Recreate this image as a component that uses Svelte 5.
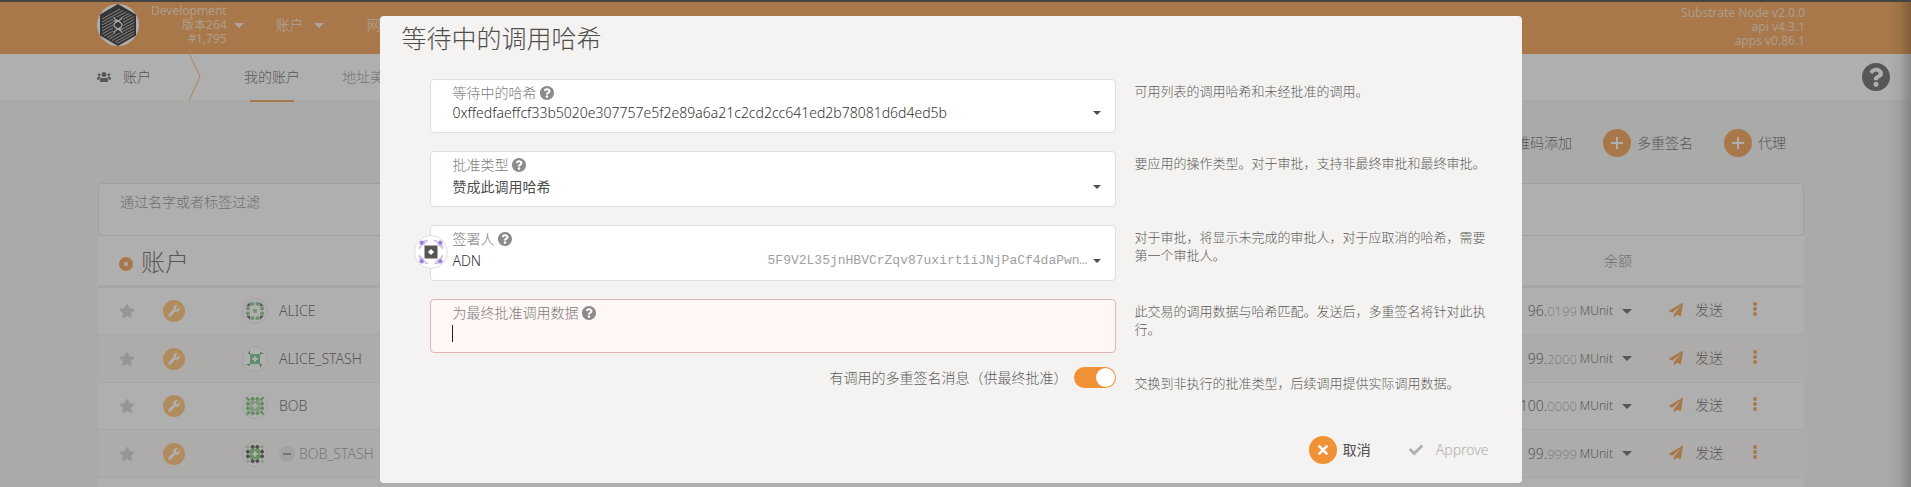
<script>
  const accounts = [
    { name: 'ALICE', kind: 'alice', whole: '96', decimals: '0199' },
    { name: 'ALICE_STASH', kind: 'aliceStash', whole: '99', decimals: '2000' },
    { name: 'BOB', kind: 'bob', whole: '100', decimals: '0000' },
    { name: 'BOB_STASH', kind: 'bobStash', whole: '99', decimals: '9999', muted: true }
  ];
  const sides = [[1, 0], [2, 0], [3, 1], [3, 2], [2, 3], [1, 3], [0, 2], [0, 1]];
  const corners = [[0, 0, 0], [3, 0, 90], [3, 3, 180], [0, 3, 270]];
  const looks = {
    alice: { side: 'square', sideColor: '#6fc46f', corner: 'wedge', cornerColor: '#4b4b4b', core: '#8ccb8c', coreShape: 'small' },
    aliceStash: { side: 'none', sideColor: '#fff', corner: 'spike', cornerColor: '#2f8a4a', core: '#5bbd7c', coreShape: 'star' },
    bob: { side: 'diamond', sideColor: '#66b85c', corner: 'blade', cornerColor: '#66b85c', core: '#a3d39b', coreShape: 'star' },
    bobStash: { side: 'diamond', sideColor: '#3f3f3f', corner: 'dot', cornerColor: '#a8dca0', core: '#6cc35c', coreShape: 'star' },
    adn: { side: 'shard', sideColor: '#cfc2ec', corner: 'dot', cornerColor: '#9b82d8', core: '#555555', coreShape: 'diamond' }
  };
  let hash = $state('0xffedfaeffcf33b5020e307757e5f2e89a6a21c2cd2cc641ed2b78081d6d4ed5b');
  let callData = $state('');
  let withCall = $state(true);
</script>

{#snippet helpIcon()}
  <svg class="help-icon" viewBox="8 8 496 496" aria-hidden="true"><path d="M504 256c0 136.997-111.043 248-248 248S8 392.997 8 256C8 119.083 119.043 8 256 8s248 111.083 248 248zM262.655 90c-54.497 0-89.255 22.957-116.549 63.758-3.536 5.286-2.353 12.415 2.715 16.258l34.699 26.31c5.205 3.947 12.621 3.008 16.665-2.122 17.864-22.658 30.113-35.797 57.303-35.797 20.429 0 45.698 13.148 45.698 32.958 0 14.976-12.363 22.667-32.534 33.976C247.128 238.528 216 254.941 216 296v4c0 6.627 5.373 12 12 12h56c6.627 0 12-5.373 12-12v-1.333c0-28.462 83.186-29.647 83.186-106.667 0-58.002-60.165-102-116.531-102zM256 338c-25.365 0-46 20.635-46 46 0 25.364 20.635 46 46 46s46-20.636 46-46c0-25.365-20.635-46-46-46z" /></svg>
{/snippet}

{#snippet plusIcon()}
  <span class="round"><svg viewBox="0 0 14 14" width="14" height="14" aria-hidden="true"><path d="M7 1.8v10.4M1.8 7h10.4" stroke="#fff" stroke-width="2" stroke-linecap="round" /></svg></span>
{/snippet}

{#snippet identicon(kind)}
  {@const look = looks[kind]}
  <svg class="identicon" viewBox="-0.75 -0.75 5.5 5.5" aria-hidden="true">
    <circle cx="2" cy="2" r="2.65" fill="#fff" stroke="#ddd" stroke-width=".16" />
    {#each sides as [x, y]}
      {#if look.side === 'square'}
        <rect x={x + 0.14} y={y + 0.14} width=".72" height=".72" rx=".12" fill={look.sideColor} />
      {:else if look.side === 'diamond'}
        <path d="M{x + 0.5} {y}l.5 .5l-.5 .5l-.5 -.5z" fill={look.sideColor} />
        <circle cx={x + 0.5} cy={y + 0.5} r=".34" fill={look.sideColor} />
      {/if}
    {/each}
    {#if look.side === 'shard'}
      {#each [0, 90, 180, 270] as turn}
        <path d="M.85 .95L1.6 0L.8 .05zM2.25 0L3.2 .8L3 .1z" fill={look.sideColor} transform="rotate({turn} 2 2)" />
      {/each}
    {/if}
    {#each corners as [x, y, turn]}
      {#if look.corner === 'wedge'}
        <path d="M1 .1V1H.1z" fill={look.cornerColor} transform="rotate({turn} 2 2)" />
      {:else if look.corner === 'spike'}
        <path d="M.9 .1L1 1L.5 .9z" fill={look.cornerColor} transform="rotate({turn} 2 2)" />
      {:else if look.corner === 'blade'}
        <path d="M0 .1L.5 .2L1 .6L.8 1L.3 .8z" fill={look.cornerColor} transform="rotate({turn} 2 2)" />
      {:else}
        <circle cx={x + 0.5} cy={y + 0.5} r=".36" fill={look.cornerColor} />
      {/if}
    {/each}
    {#if look.coreShape === 'small'}
      <rect x="1.6" y="1.6" width=".8" height=".8" fill={look.core} />
    {:else}
      <rect x=".95" y=".95" width="2.1" height="2.1" fill={look.core} />
      {#if look.coreShape === 'star'}
        <path d="M2 1.2L2.25 1.75L2.8 2L2.25 2.25L2 2.8L1.75 2.25L1.2 2L1.75 1.75z" fill="#fff" />
      {:else}
        <path d="M2 1.5L2.5 2L2 2.5L1.5 2z" fill="#fff" />
      {/if}
    {/if}
  </svg>
{/snippet}

<div class="page">
  <header class="topbar">
    <div class="brand">
      <svg class="logo" viewBox="0 0 42 42" aria-hidden="true">
        <circle cx="21" cy="21" r="21" fill="#fff" />
        <path d="M21 0L39 10.4V31.4L21 42L3 31.4V10.4z" fill="#0b0b0b" />
        <g stroke="#ccc" stroke-width=".8">
          <path d="M5 15L23 5M5 18L26 6.5M5 21L29 8M5 24L32 9.5M5 27L35 10.5M5 30L37 12.5M7 32L37 15.5M10 33.5L37 18.5M12 35L37 21.5M15 36.5L37 24.5M18 38L37 27.5M20 39.5L37 30" />
        </g>
        <path d="M16 13h10v16H16z" fill="#0b0b0b" />
        <path d="M17 13c0 4 8 4 8 8s-8 4-8 8M25 13c0 4-8 4-8 8s8 4 8 8M16 17h6M20 25h6" fill="none" stroke="#fff" stroke-width="1.2" />
      </svg>
      <div class="chain"><span>Development</span><span>版本264</span><span>#1,795</span></div>
      <i class="caret"></i>
    </div>
    <nav class="menu">
      <a href="#accounts">账户<i class="caret"></i></a>
      <a href="#network">网络<i class="caret"></i></a>
    </nav>
    <div class="versions"><span>Substrate Node v2.0.0</span><span>api v4.3.1</span><span>apps v0.86.1</span></div>
  </header>

  <nav class="tabs">
    <span class="section">
      <svg viewBox="0 0 640 512" width="14" height="12" aria-hidden="true"><path d="M96 224c35.3 0 64-28.7 64-64s-28.7-64-64-64-64 28.7-64 64 28.7 64 64 64zm448 0c35.3 0 64-28.7 64-64s-28.7-64-64-64-64 28.7-64 64 28.7 64 64 64zm32 32h-64c-17.6 0-33.5 7.1-45.1 18.6 40.3 22.1 68.9 62 75.1 109.4h66c17.7 0 32-14.3 32-32v-32c0-35.3-28.7-64-64-64zm-256 0c61.9 0 112-50.1 112-112S381.9 32 320 32 208 82.1 208 144s50.1 112 112 112zm76.8 32h-8.3c-20.8 10-43.9 16-68.5 16s-47.6-6-68.5-16h-8.3C179.6 288 128 339.6 128 403.2V432c0 26.5 21.5 48 48 48h288c26.5 0 48-21.5 48-48v-28.8c0-63.6-51.6-115.2-115.2-115.2zm-223.7-13.4C161.5 263.1 145.6 256 128 256H64c-35.3 0-64 28.7-64 64v32c0 17.7 14.3 32 32 32h65.9c6.3-47.4 34.9-87.3 75.2-109.4z" fill="#4e4e4e" /></svg>
      账户
    </span>
    <svg class="divider" viewBox="0 0 12 46" width="12" height="46" aria-hidden="true"><path d="M.5 .5L11 22.5L.5 45.5" fill="none" stroke="#f19135" stroke-width=".8" /></svg>
    <a class="tab active" href="#mine">我的账户</a>
    <a class="tab" href="#vanity">地址美化</a>
    <button class="help" aria-label="帮助">{@render helpIcon()}</button>
  </nav>

  <main>
    <div class="actions">
      <button>{@render plusIcon()}二维码添加</button>
      <button>{@render plusIcon()}多重签名</button>
      <button>{@render plusIcon()}代理</button>
    </div>
    <div class="filter">
      <label for="filter">通过名字或者标签过滤</label>
      <input id="filter" type="text" />
    </div>
    <div class="list">
      <table>
        <colgroup><col class="c-star" /><col class="c-tool" /><col /><col class="c-balance" /><col class="c-send" /><col class="c-more" /></colgroup>
        <thead>
          <tr>
            <th colspan="3"><h1><i class="ring"></i>账户</h1></th>
            <th class="right">余额</th>
            <th colspan="2"></th>
          </tr>
        </thead>
        <tbody>
          {#each accounts as account}
            <tr>
              <td class="star"><svg viewBox="0 0 576 512" width="16" height="14" aria-hidden="true"><path fill="#ccc" d="M259.3 17.8L194 150.2 47.9 171.5c-26.2 3.8-36.7 36.1-17.7 54.6l105.7 103-25 145.5c-4.5 26.3 23.2 46 46.4 33.7L288 439.6l130.7 68.7c23.2 12.2 50.9-7.4 46.4-33.7l-25-145.5 105.7-103c19-18.5 8.5-50.8-17.7-54.6L382 150.2 316.7 17.8c-11.7-23.6-45.6-23.9-57.4 0z" /></svg></td>
              <td class="tool"><span class="badge"><svg viewBox="0 0 512 512" width="12" height="12" aria-hidden="true"><path fill="#fff" d="M507.73 109.1c-2.24-9.03-13.54-12.09-20.12-5.51l-74.36 74.36-67.88-11.31-11.31-67.88 74.36-74.36c6.62-6.62 3.43-17.9-5.66-20.16-47.38-11.74-99.55.91-136.58 37.93-39.64 39.64-50.55 97.1-34.05 147.2L18.74 402.76c-24.99 24.99-24.99 65.51 0 90.5 24.99 24.99 65.51 24.99 90.5 0l213.21-213.21c50.12 16.71 107.47 5.68 147.37-34.22 37.07-37.07 49.7-89.32 37.91-136.73zM64 472c-13.25 0-24-10.75-24-24 0-13.26 10.75-24 24-24s24 10.74 24 24c0 13.25-10.75 24-24 24z" /></svg></span></td>
              <td>
                <div class="who" class:muted={account.muted}>
                  {@render identicon(account.kind)}
                  {#if account.muted}<i class="minus"></i>{/if}
                  <span>{account.name}</span>
                </div>
              </td>
              <td><div class="balance"><span>{account.whole}.</span><span class="decimals">{account.decimals}</span><span class="unit">MUnit</span><i class="caret"></i></div></td>
              <td><button class="send"><svg viewBox="0 0 512 512" width="14" height="14" aria-hidden="true"><path fill="#f19135" d="M476 3.2L12.5 270.6c-18.1 10.4-15.8 35.6 2.2 43.2L121 358.4l287.3-253.2c5.5-4.9 13.3 2.6 8.6 8.3L176 407v80.5c0 23.6 28.5 32.9 42.5 15.8L282 426l124.6 52.2c14.2 6 30.4-2.9 33-18.2l72-432C515 7.8 493.3-6.8 476 3.2z" /></svg>发送</button></td>
              <td><button class="more" aria-label="更多"><svg viewBox="0 0 6 14" width="6" height="14" aria-hidden="true"><g fill="#f19135"><circle cx="3" cy="2" r="2" /><circle cx="3" cy="7" r="2" /><circle cx="3" cy="12" r="2" /></g></svg></button></td>
            </tr>
          {/each}
        </tbody>
      </table>
    </div>
  </main>
</div>

<div class="overlay">
  <div class="edge"></div>
  <div class="modal" role="dialog" aria-modal="true" aria-labelledby="title">
    <h2 id="title">等待中的调用哈希</h2>
    <div class="form">
      <div class="field">
        <label for="hash">等待中的哈希 {@render helpIcon()}</label>
        <div class="control"><select id="hash" bind:value={hash}><option value={hash}>{hash}</option></select><i class="caret small"></i></div>
      </div>
      <p>可用列表的调用哈希和未经批准的调用。</p>

      <div class="field tall">
        <label for="kind">批准类型 {@render helpIcon()}</label>
        <div class="control"><select id="kind" class="strong"><option>赞成此调用哈希</option></select><i class="caret small"></i></div>
      </div>
      <p>要应用的操作类型。对于审批，支持非最终审批和最终审批。</p>

      <div class="field tall">
        <div class="avatar">{@render identicon('adn')}</div>
        <label for="signer">签署人 {@render helpIcon()}</label>
        <div class="control"><select id="signer"><option>ADN</option></select><span class="address">5F9V2L35jnHBVCrZqv87uxirt1iJNjPaCf4daPwn…</span><i class="caret small"></i></div>
      </div>
      <p>对于审批，将显示未完成的审批人，对于应取消的哈希，需要第一个审批人。</p>

      <div class="field error">
        <label for="data">为最终批准调用数据 {@render helpIcon()}</label>
        <div class="control"><i class="cursor"></i><input id="data" type="text" bind:value={callData} /></div>
      </div>
      <p>此交易的调用数据与哈希匹配。发送后，多重签名将针对此执行。</p>

      <label class="toggle">有调用的多重签名消息（供最终批准）<input type="checkbox" role="switch" bind:checked={withCall} /></label>
      <p>交换到非执行的批准类型，后续调用提供实际调用数据。</p>
    </div>
    <footer>
      <button class="cancel"><span class="round"><svg viewBox="0 0 12 12" width="12" height="12" aria-hidden="true"><path d="M2.4 2.4l7.2 7.2M9.6 2.4l-7.2 7.2" stroke="#fff" stroke-width="2.6" stroke-linecap="round" /></svg></span>取消</button>
      <button class="approve" disabled><svg viewBox="0 0 512 512" width="14" height="14" aria-hidden="true"><path fill="currentColor" d="M173.898 439.404l-166.4-166.4c-9.997-9.997-9.997-26.206 0-36.204l36.203-36.204c9.997-9.998 26.207-9.998 36.204 0L192 312.69 432.095 72.596c9.997-9.997 26.207-9.997 36.204 0l36.203 36.204c9.997 9.997 9.997 26.206 0 36.204l-294.4 294.401c-9.998 9.997-26.207 9.997-36.204-.001z" /></svg>Approve</button>
    </footer>
  </div>
</div>

<style>
  :global(body) {
    background: #f5f4f3;
    color: #4e4e4e;
    font: 300 14px/18px "Noto Sans", "Noto Sans CJK SC", sans-serif;
  }
  * { box-sizing: border-box; }
  button, input, select { font: inherit; color: inherit; border: 0; background: none; padding: 0; margin: 0; outline: 0; }
  button { display: inline-flex; align-items: center; white-space: nowrap; }
  a { color: inherit; text-decoration: none; }
  svg { display: block; flex: none; }

  .page { height: 100vh; overflow: hidden; display: flex; flex-direction: column; }
  .caret { flex: none; border: 5px solid transparent; border-top-color: currentColor; border-bottom: 0; }
  .caret.small { border-width: 4px; border-bottom: 0; }
  .help-icon { width: 14px; height: 14px; fill: #8b8b8b; }
  .round { display: inline-flex; align-items: center; justify-content: center; width: 28px; height: 28px; border-radius: 50%; background: #f19135; }

  .topbar { flex: none; display: flex; align-items: center; height: 54px; padding: 0 106px 6px 97px; border-top: 2px solid #262626; background: #f19135; color: rgba(255, 255, 255, 0.8); }
  .brand { display: flex; align-items: center; gap: 7px; }
  .logo { width: 42px; height: 42px; }
  .chain, .versions { display: flex; flex-direction: column; text-align: right; font-size: 12px; font-weight: 400; line-height: 14px; color: rgba(255, 255, 255, 0.66); }
  .chain { padding-left: 5px; }
  .versions { margin-left: auto; padding-top: 4px; }
  .menu { display: flex; gap: 43px; margin-left: 32px; }
  .menu a { display: flex; align-items: center; gap: 10px; }

  .tabs { flex: none; display: flex; align-items: center; height: 46px; padding: 0 12px 0 97px; background: #fff; margin-right: 9px; box-shadow: 9px 0 #fff, 0 1px #efeded; }
  .section { display: flex; align-items: center; gap: 12px; }
  .divider { margin: 0 43px 0 38px; }
  .tab { position: relative; margin-right: 42px; color: #8b8b8b; }
  .tab.active { color: #4e4e4e; }
  .tab.active::after { content: ""; position: absolute; left: 6px; right: 6px; top: 32px; height: 2px; background: #f19135; }
  .help { margin-left: auto; }
  .help .help-icon, .help :global(.help-icon) { width: 28px; height: 28px; fill: #4e4e4e; }

  main { flex: 1; display: flex; flex-direction: column; padding: 29px 107px 0 98px; min-height: 0; }
  .actions { display: flex; justify-content: flex-end; gap: 31px; padding-right: 18px; margin-bottom: 26px; }
  .actions button { gap: 6px; }
  .filter { flex: none; height: 53px; padding: 9px 21px 0; border: 1px solid #dededf; border-radius: 4px; background: #fff; color: #7c7c7c; }
  .filter label, .filter input { display: block; width: 100%; }
  .list { flex: 1; background: #fff; }
  table { width: 100%; table-layout: fixed; border-collapse: separate; border-spacing: 0; }
  th, td { padding: 0; border-bottom: 1px solid #efeded; text-align: left; font-weight: 300; }
  th { height: 52px; border-bottom-width: 3px; vertical-align: middle; }
  .right { text-align: right; color: #7c7c7c; }
  td { height: 48px; }
  tbody tr:nth-child(odd) td { height: 47px; }
  tbody tr:nth-child(even) td { background: #faf8f6; }
  h1 { display: flex; align-items: center; gap: 8px; margin: 0; padding: 2px 0 0 21px; font-size: 24px; font-weight: 300; line-height: 32px; color: #4e4e4e; }
  .ring { width: 14px; height: 14px; margin-top: 4px; border: 5px solid #f19135; border-radius: 50%; }
  .c-star { width: 65px; }
  .c-tool { width: 79px; }
  .c-balance { width: 180px; }
  .c-send { width: 115px; }
  .c-more { width: 57px; }
  .star { padding-left: 21px; }
  .tool { vertical-align: middle; }
  .badge { display: flex; align-items: center; justify-content: center; width: 22px; height: 22px; border-radius: 50%; background: #ffb75a; }
  .who, .balance { display: flex; align-items: center; }
  .who span { margin-left: 11px; }
  .identicon { width: 26px; height: 26px; }
  .muted .minus + span { margin-left: 4px; opacity: 0.6; }
  .minus { display: flex; align-items: center; justify-content: center; width: 16px; height: 16px; margin-left: 11px; border-radius: 50%; background: #e3e4e6; }
  .minus::after { content: ""; width: 8px; height: 2px; background: #8b8b8b; }
  .balance { justify-content: flex-end; }
  .decimals { font-size: 13px; font-weight: 200; opacity: 0.7; }
  .unit { margin: 0 9px 0 3px; font-size: 12px; }
  .send { gap: 12px; margin-left: 37px; }
  .more { margin-left: 5px; }

  .overlay { position: fixed; inset: 0; display: flex; justify-content: center; align-items: flex-start; padding: 16px 9px 4px 0; background: rgba(96, 96, 96, 0.5); }
  .edge { position: absolute; top: 2px; right: 0; bottom: 0; width: 24px; background: linear-gradient(to right, transparent, rgba(0, 0, 0, 0.05) 50%, rgba(0, 0, 0, 0.22)); }
  .modal { width: 60%; border-radius: 4px; background: #f4f3f1; padding-bottom: 19px; }
  h2 { margin: 0; padding: 5px 21px 0; font-size: 25px; font-weight: 300; line-height: 34px; color: #4e4e4e; }
  .form { display: grid; grid-template-columns: 17fr 9fr; column-gap: 18px; row-gap: 18px; align-items: start; padding: 24px 24px 0 50px; }
  .form p { margin: 0; padding-top: 3px; font-size: 13px; line-height: 18px; color: #5c5c5c; }
  .field { position: relative; height: 54px; padding: 4px 21px 0; border: 1px solid #dededf; border-radius: 4px; background: #fff; }
  .field.tall { height: 56px; }
  .field.error { background: #fff6f6; border-color: #e0b4b4; }
  .field label { display: flex; align-items: center; gap: 4px; line-height: 18px; color: #7c7c7c; }
  .control { display: flex; align-items: center; height: 22px; margin-right: -7px; }
  .tall .control { height: 26px; }
  select { appearance: none; flex: 1; min-width: 0; height: 22px; color: #333; }
  select.strong { font-weight: 400; color: #4e4e4e; }
  .control input { flex: 1; height: 20px; }
  .cursor { width: 1px; height: 17px; background: #222; }
  .address { font-family: "Liberation Mono", monospace; font-size: 13px; font-weight: 400; color: #a0a0a0; margin-right: 6px; }
  .avatar { position: absolute; left: -17px; top: 9px; }
  .avatar .identicon, .avatar :global(.identicon) { width: 34px; height: 34px; }
  .toggle { display: flex; align-items: center; justify-content: flex-end; gap: 7px; margin-top: -4px; color: #5c5c5c; }
  .toggle input { appearance: none; display: flex; align-items: center; justify-content: flex-end; width: 42px; height: 21px; padding: 1px; border-radius: 11px; background: #f19135; }
  .toggle input:not(:checked) { justify-content: flex-start; background: #ccc; }
  .toggle input::after { content: ""; width: 19px; height: 19px; border-radius: 50%; background: #fff; }
  footer { display: flex; justify-content: flex-end; gap: 38px; padding: 44px 33px 0 0; }
  .cancel { gap: 6px; font-weight: 400; }
  .approve { gap: 13px; color: #b0b0b0; }
</style>
